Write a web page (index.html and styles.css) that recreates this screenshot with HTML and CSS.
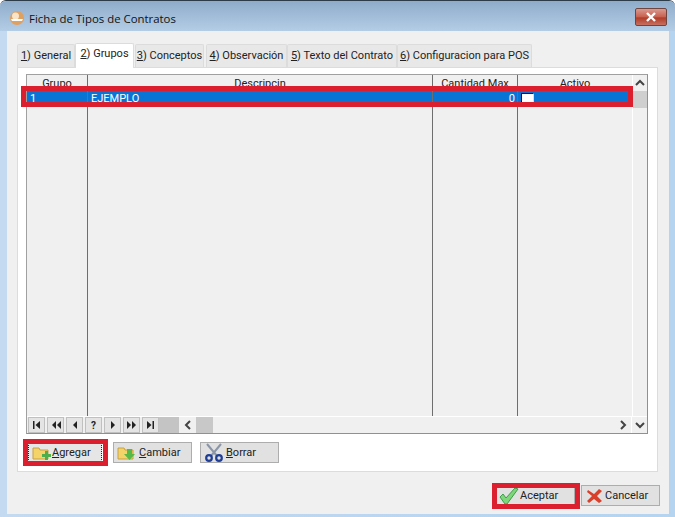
FILE: index.html
```html
<!DOCTYPE html>
<html lang="es">
<head>
  <meta charset="UTF-8" />
  <title>Ficha de Tipos de Contratos</title>
  <link rel="stylesheet" href="styles.css">
</head>
<body>
  <div class="window">
    <div class="titlebar">
      <svg class="app-icon" width="16" height="16" viewBox="0 0 16 16">
        <circle cx="8" cy="8" r="7" fill="#e0a060"/>
        <circle cx="6.5" cy="6" r="3.5" fill="#f8e4c8"/>
        <path d="M2 9h12l-1 2H3z" fill="#fff"/>
      </svg>
      <span class="title">Ficha de Tipos de Contratos</span>
      <div class="close">
        <svg width="12" height="10" viewBox="0 0 12 10"><path d="M2 1l8 8M10 1L2 9" stroke="#fff" stroke-width="2.4"/></svg>
      </div>
    </div>

    <div class="client">
      <div class="tabs">
        <div class="tab t1"><u>1</u>) General</div>
        <div class="tab t2 active"><u>2</u>) Grupos</div>
        <div class="tab t3"><u>3</u>) Conceptos</div>
        <div class="tab t4"><u>4</u>) Observación</div>
        <div class="tab t5"><u>5</u>) Texto del Contrato</div>
        <div class="tab t6"><u>6</u>) Configuracion para POS</div>
      </div>

      <div class="panel">
        <div class="grid">
          <div class="grid-main">
            <div class="cols">
              <div class="col c-grupo"><div class="head">Grupo</div><div class="cell">1</div></div>
              <div class="col c-desc"><div class="head">Descripcin</div><div class="cell">EJEMPLO</div></div>
              <div class="col c-cant"><div class="head">Cantidad Max</div><div class="cell num">0</div></div>
              <div class="col c-act"><div class="head">Activo</div><div class="cell"><span class="check"></span></div></div>
            </div>
            <div class="vscroll">
              <div class="sb-btn">
                <svg width="10" height="8" viewBox="0 0 10 8"><path d="M1 6l4-4 4 4" fill="none" stroke="#444" stroke-width="2"/></svg>
              </div>
              <div class="v-thumb"></div>
            </div>
          </div>

          <div class="grid-bottom">
            <div class="nav">
              <div class="nav-btn"><svg width="9" height="8" viewBox="0 0 9 8"><path d="M1 0h1.500v8H1zM8 0v8L3.500 4z" fill="#222"/></svg></div>
              <div class="nav-btn"><svg width="10" height="8" viewBox="0 0 10 8"><path d="M5 0v8L1 4zM10 0v8L6 4z" fill="#222"/></svg></div>
              <div class="nav-btn"><svg width="6" height="8" viewBox="0 0 6 8"><path d="M5 0v8L1 4z" fill="#222"/></svg></div>
              <div class="nav-btn q">?</div>
              <div class="nav-btn"><svg width="6" height="8" viewBox="0 0 6 8"><path d="M1 0v8l4-4z" fill="#222"/></svg></div>
              <div class="nav-btn"><svg width="10" height="8" viewBox="0 0 10 8"><path d="M0 0v8l4-4zM5 0v8l4-4z" fill="#222"/></svg></div>
              <div class="nav-btn"><svg width="9" height="8" viewBox="0 0 9 8"><path d="M1 0v8l4.500-4zM6.500 0H8v8H6.500z" fill="#222"/></svg></div>
            </div>
            <div class="nav-fill"></div>
            <div class="hscroll">
              <div class="sb-btn h"><svg width="8" height="10" viewBox="0 0 8 10"><path d="M6 1L2 5l4 4" fill="none" stroke="#444" stroke-width="2"/></svg></div>
              <div class="h-thumb"></div>
              <div class="h-track"></div>
              <div class="sb-btn h"><svg width="8" height="10" viewBox="0 0 8 10"><path d="M2 1l4 4-4 4" fill="none" stroke="#444" stroke-width="2"/></svg></div>
              <div class="sb-btn v"><svg width="10" height="8" viewBox="0 0 10 8"><path d="M1 2l4 4 4-4" fill="none" stroke="#444" stroke-width="2"/></svg></div>
            </div>
          </div>
        </div>

        <div class="grid-actions">
          <button class="btn focus">
            <svg width="20" height="16" viewBox="0 0 20 16">
              <path d="M1 3h6l1 2h8v9H1z" fill="#f4d468" stroke="#c8a040"/>
              <path d="M10 9h3V6h3v3h3v3h-3v3h-3v-3h-3z" fill="#4cae4c"/>
            </svg>
            <span><u>A</u>gregar</span>
          </button>
          <button class="btn">
            <svg width="20" height="16" viewBox="0 0 20 16">
              <path d="M1 3h6l1 2h8v9H1z" fill="#f4d468" stroke="#c8a040"/>
              <path d="M10 4h5v5h3l-5.500 6L7 9h3z" fill="#58b848"/>
            </svg>
            <span><u>C</u>ambiar</span>
          </button>
          <button class="btn">
            <svg width="20" height="19" viewBox="0 0 20 19">
              <path d="M3 1l10 12M17 1L7 13" stroke="#8a96a8" stroke-width="2"/>
              <circle cx="5" cy="15" r="2.800" fill="none" stroke="#1f3f96" stroke-width="2.200"/>
              <circle cx="15" cy="15" r="2.800" fill="none" stroke="#1f3f96" stroke-width="2.200"/>
            </svg>
            <span><u>B</u>orrar</span>
          </button>
        </div>
      </div>

      <div class="footer">
        <button class="btn ok">
          <svg width="20" height="18" viewBox="0 0 20 18"><path d="M1 10l3-3 3 4L16 1l3 1L8 17H6z" fill="#7ed67a" stroke="#3f9c48"/></svg>
          <span>Aceptar</span>
        </button>
        <button class="btn">
          <svg width="18" height="16" viewBox="0 0 18 16"><path d="M3 2l6 4 5-5 3 2-5 5 5 5-3 2-5-4-5 4-2-2 5-5-5-4z" fill="#d8402c"/></svg>
          <span>Cancelar</span>
        </button>
      </div>
    </div>

    <!-- red marks painted over the capture -->
    <div class="mark m-row"></div>
    <div class="mark m-add"></div>
    <div class="mark m-ok"></div>
  </div>
</body>
</html>
```

FILE: styles.css
```css
* {
  box-sizing: border-box;
}

html, body {
  margin: 0;
  height: 517px;
  overflow: hidden;
}

body {
  font-family: Roboto, 'Liberation Sans', sans-serif;
  font-size: 11px;
  color: #222;
  background: #fff;
}

.window {
  position: relative;
  width: 675px;
  height: 517px;
  display: flex;
  flex-direction: column;
  border-top: 1px solid #2c3c48;
  border-radius: 6px 6px 0 0;
  background: linear-gradient(90deg, #c4daf0 0, #bcd6f0 50%, #b4d4f0 100%);
  padding: 0 6px 3px 7px;
}

.titlebar {
  height: 30px;
  margin: 0 -6px 0 -7px;
  padding: 3px 8px 0 9px;
  display: flex;
  align-items: center;
  background: linear-gradient(180deg, #8eacca 0, #b4cde6 100%);
  border-radius: 6px 6px 0 0;
}

.app-icon {
  margin-right: 4px;
}

.title {
  flex: 1;
  font-family: 'Open Sans', sans-serif;
  font-size: 11.400px;
  color: #111;
  padding-top: 2px;
}

.close {
  width: 32px;
  height: 18px;
  margin-top: -2px;
  display: flex;
  align-items: center;
  justify-content: center;
  background: linear-gradient(180deg, #d89a90 0, #c8604e 50%, #b03c28 55%, #c87060 100%);
  border: 1px solid #70453f;
  border-radius: 2px;
}

.client {
  flex: 1;
  background: #f0f0f0;
  display: flex;
  flex-direction: column;
  padding: 13px 11px 0 10px;
}

.tabs {
  height: 23px;
  display: flex;
  align-items: flex-end;
}

.tab {
  height: 23px;
  line-height: 21px;
  text-align: center;
  background: #e8e8e8;
  border: 1px solid #dcdcdc;
  border-bottom: none;
  border-radius: 2px 2px 0 0;
  white-space: nowrap;
}

.tab.active {
  height: 25px;
  margin-bottom: -1px;
  background: #fff;
  position: relative;
  line-height: 20px;
  z-index: 1;
}

.t1 { width: 58px; }
.t2 { width: 59px; }
.t3 { width: 69px; margin-left: 1px; }
.t4 { width: 81px; margin-left: 2px; }
.t5 { width: 110px; }
.t6 { width: 135px; }

.panel {
  width: 641px;
  height: 405px;
  background: #fff;
  border: 1px solid #dcdcdc;
  padding: 6px 9px 0 8px;
}

.grid {
  width: 622px;
  height: 360px;
  display: flex;
  flex-direction: column;
  background: #f0f0f0;
  border: 1px solid #a0a0a0;
  border-right-color: #909090;
  border-bottom-color: #909090;
}

.grid-main {
  flex: 1;
  display: flex;
  min-height: 0;
}

.cols {
  flex: 1;
  display: flex;
}

.col {
  border-right: 1px solid #6e6e6e;
}

.c-grupo { width: 61px; }
.c-desc { width: 345px; }
.c-cant { width: 85px; }
.c-act { flex: 1; border-right: none; }

.head {
  height: 16px;
  line-height: 18px;
  text-align: center;
  background: #f0f0f0;
}

.cell {
  height: 13px;
  line-height: 13px;
  padding: 1px 0 0 3px;
  background: #0a74d4;
  color: #fff;
  white-space: nowrap;
  display: flex;
  align-items: center;
}

.num {
  justify-content: flex-end;
  padding: 1px 2px 0 0;
}

.check {
  display: block;
  width: 13px;
  height: 11px;
  background: #fff;
  border: 1px solid #111;
  border-right-color: #ddd;
  border-bottom-color: #ddd;
}

.vscroll {
  width: 15px;
  display: flex;
  flex-direction: column;
  background: #f0f0f0;
  border-left: 1px solid #fff;
}

.sb-btn {
  display: flex;
  align-items: center;
  justify-content: center;
  flex-shrink: 0;
}

.vscroll .sb-btn {
  height: 16px;
}

.v-thumb {
  height: 17px;
  background: #cfcfcf;
}

.grid-bottom {
  height: 17px;
  display: flex;
  border-top: 1px solid #fff;
}

.nav {
  display: flex;
  gap: 2px;
  padding-left: 1px;
}

.nav-btn {
  width: 17px;
  height: 16px;
  display: flex;
  align-items: center;
  justify-content: center;
  background: #e4e4e4;
  border: 1px solid #c0c0c0;
  font-weight: 700;
  font-size: 10px;
}

.nav-fill {
  width: 20px;
  background: #c4c4c4;
}

.hscroll {
  flex: 1;
  display: flex;
  background: #f0f0f0;
}

.sb-btn.h {
  width: 17px;
}

.sb-btn.v {
  width: 16px;
  border-left: 1px solid #fff;
}

.h-thumb {
  width: 17px;
  background: #c8c8c8;
}

.h-track {
  flex: 1;
}

.grid-actions {
  display: flex;
  align-items: center;
  gap: 8px;
  height: 30px;
  padding: 7px 0 0 2px;
}

.btn {
  width: 79px;
  height: 21px;
  display: flex;
  align-items: center;
  gap: 2px;
  padding: 0 0 0 3px;
  font: inherit;
  color: #222;
  background: #e1e1e1;
  border: 1px solid #adadad;
}

.btn.focus {
  width: 74px;
  height: 19px;
  margin-right: 3px;
  gap: 0;
  border: 1px dotted #222;
  background: #e6e6e6;
}

.btn.ok {
  padding-left: 2px;
  gap: 1px;
}

.footer {
  display: flex;
  justify-content: flex-end;
  gap: 6px;
  padding: 13px 0 0 0;
  margin-right: -2px;
}

.mark {
  position: absolute;
  border: 5px solid #dc1f2e;
}

.m-row {
  left: 21px;
  top: 85px;
  width: 612px;
  height: 21px;
}

.m-add {
  left: 23px;
  top: 438px;
  width: 85px;
  height: 27px;
}

.m-ok {
  left: 492px;
  top: 482px;
  width: 88px;
  height: 26px;
}
```
